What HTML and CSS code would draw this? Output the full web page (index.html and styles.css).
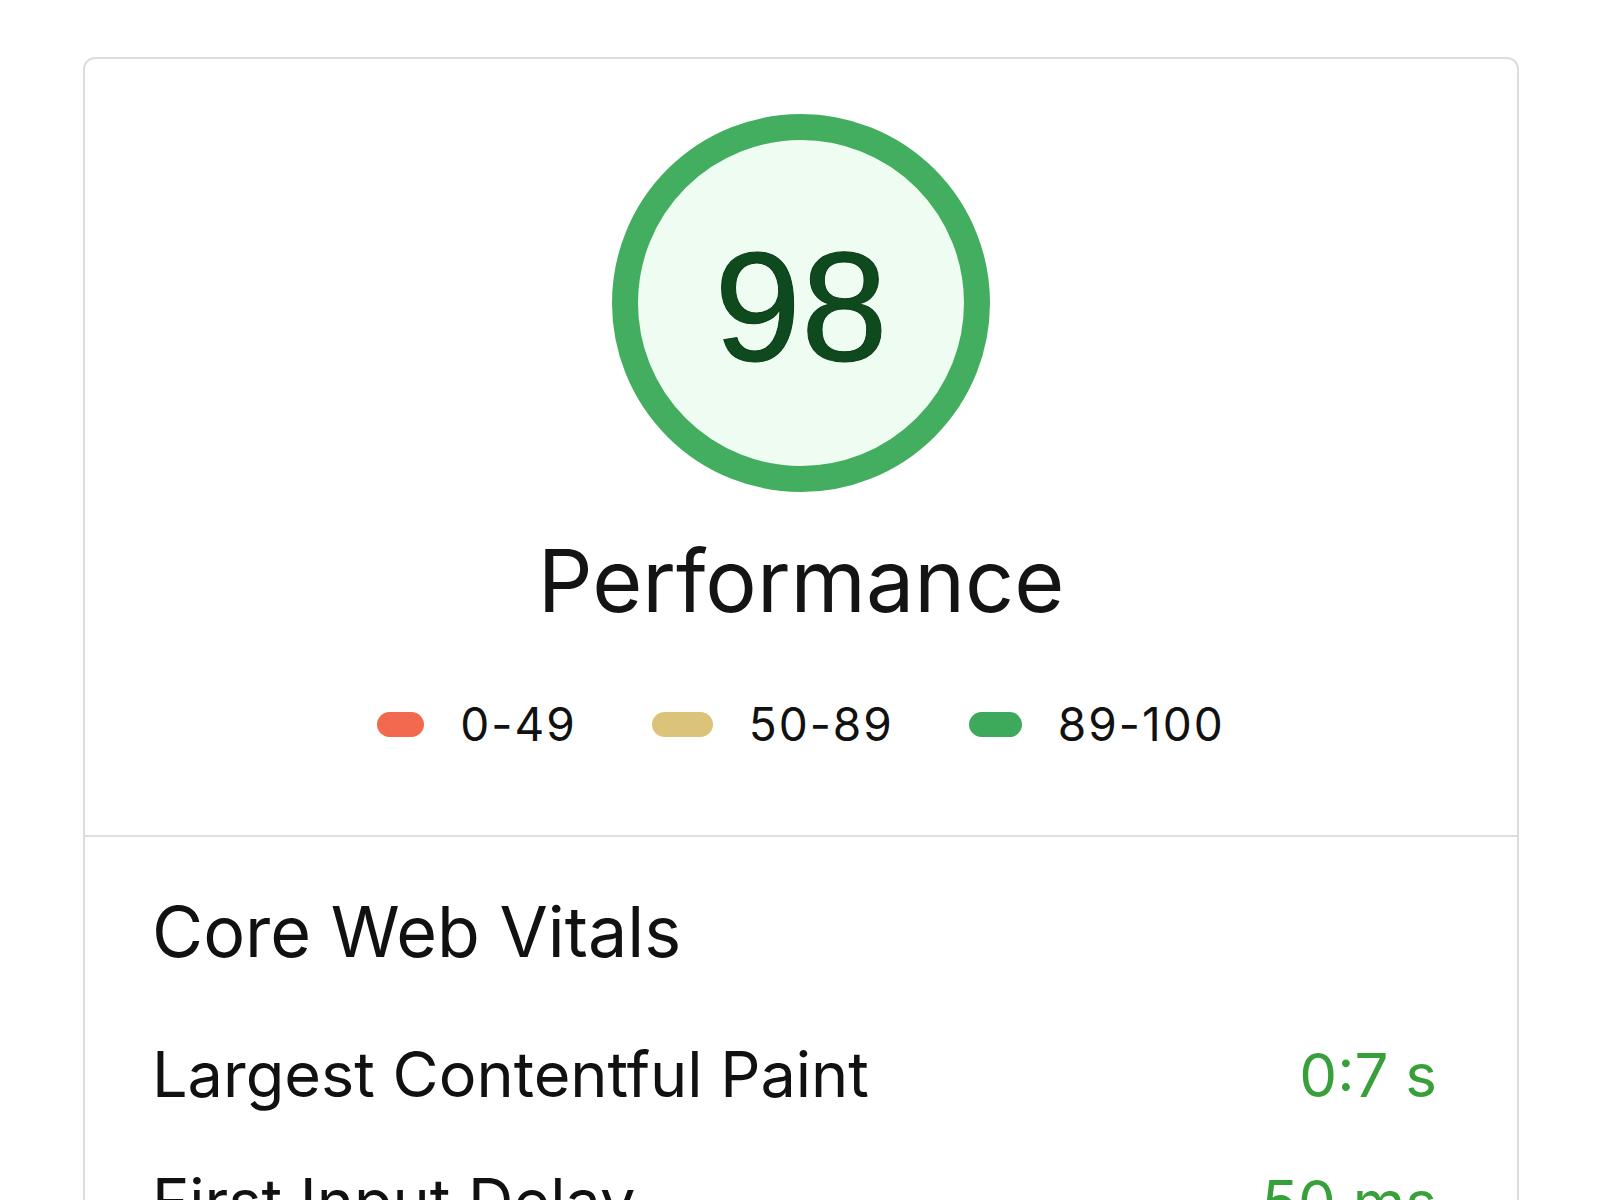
FILE: index.html
```html
<!DOCTYPE html>
<html>

  <head>
    <meta charset="UTF-8">
    <title>Performance</title>
    <link rel="stylesheet" href="styles.css">
  </head>

  <body>
    <div class="page">
      <div class="card">
        <div class="summary">
          <div class="gauge">
            <span class="score">98</span>
          </div>
          <div class="title">Performance</div>
          <div class="legend">
            <div class="legend-item">
              <span class="pill pill-fail"></span>
              <span class="range">0-49</span>
            </div>
            <div class="legend-item">
              <span class="pill pill-average"></span>
              <span class="range">50-89</span>
            </div>
            <div class="legend-item">
              <span class="pill pill-pass"></span>
              <span class="range">89-100</span>
            </div>
          </div>
        </div>

        <div class="vitals">
          <div class="vitals-title">Core Web Vitals</div>
          <div class="metric">
            <span class="metric-name">Largest Contentful Paint</span>
            <span class="metric-value">0:7 s</span>
          </div>
          <div class="metric">
            <span class="metric-name">First Input Delay</span>
            <span class="metric-value">50 ms</span>
          </div>
        </div>
      </div>
    </div>
  </body>

</html>
```

FILE: styles.css
```css
* {
  margin: 0;
  padding: 0;
  box-sizing: border-box;
}

body {
  background: #ffffff;
  color: #111111;
  font-family: Inter, "Liberation Sans", Arial, sans-serif;
}

.page {
  padding: 57px 81px 0 83px;
}

.card {
  border: 2px solid #dcdcdc;
  border-radius: 12px;
  background: #fff;
}

/* 上半部分：分数圆环 + 图例 */
.summary {
  display: flex;
  flex-direction: column;
  align-items: center;
  padding: 55px 0 88px;
  border-bottom: 2px solid #dedede;
}

.gauge {
  display: flex;
  justify-content: center;
  align-items: center;
  width: 378px;
  height: 378px;
  border: 26px solid #43ae5f;
  border-radius: 50%;
  background: #effcf1;
}

.score {
  font-family: "Liberation Sans", Arial, sans-serif;
  font-size: 156px;
  line-height: 1;
  color: #0e4a1d;
  margin-top: 6px;
  -webkit-text-stroke: 1px #0a3a16;
}

.title {
  margin-top: 46px;
  font-size: 86px;
  line-height: 1;
  color: #141414;
}

.legend {
  display: flex;
  align-items: center;
  gap: 75px;
  margin-top: 77px;
}

.legend-item {
  display: flex;
  align-items: center;
  gap: 36px;
}

.pill {
  display: block;
  height: 25px;
  border-radius: 13px;
}

.pill-fail {
  width: 47px;
  background: #f2694f;
}

.pill-average {
  width: 61px;
  background: #dbc47a;
}

.pill-pass {
  width: 53px;
  background: #3daa5b;
}

.range {
  font-size: 46px;
  line-height: 1;
  letter-spacing: 2px;
  color: #111;
}

/* 下半部分：核心指标 */
.vitals {
  padding: 60px 80px 0 67px;
}

.vitals-title {
  font-size: 70px;
  line-height: 1;
  color: #111;
  margin-bottom: 76px;
}

.metric {
  display: flex;
  justify-content: space-between;
  align-items: baseline;
  margin-bottom: 64px;
}

.metric-name {
  font-size: 63px;
  line-height: 1;
  color: #111;
}

.metric-value {
  font-size: 60px;
  line-height: 1;
  color: #38a03a;
}
```
